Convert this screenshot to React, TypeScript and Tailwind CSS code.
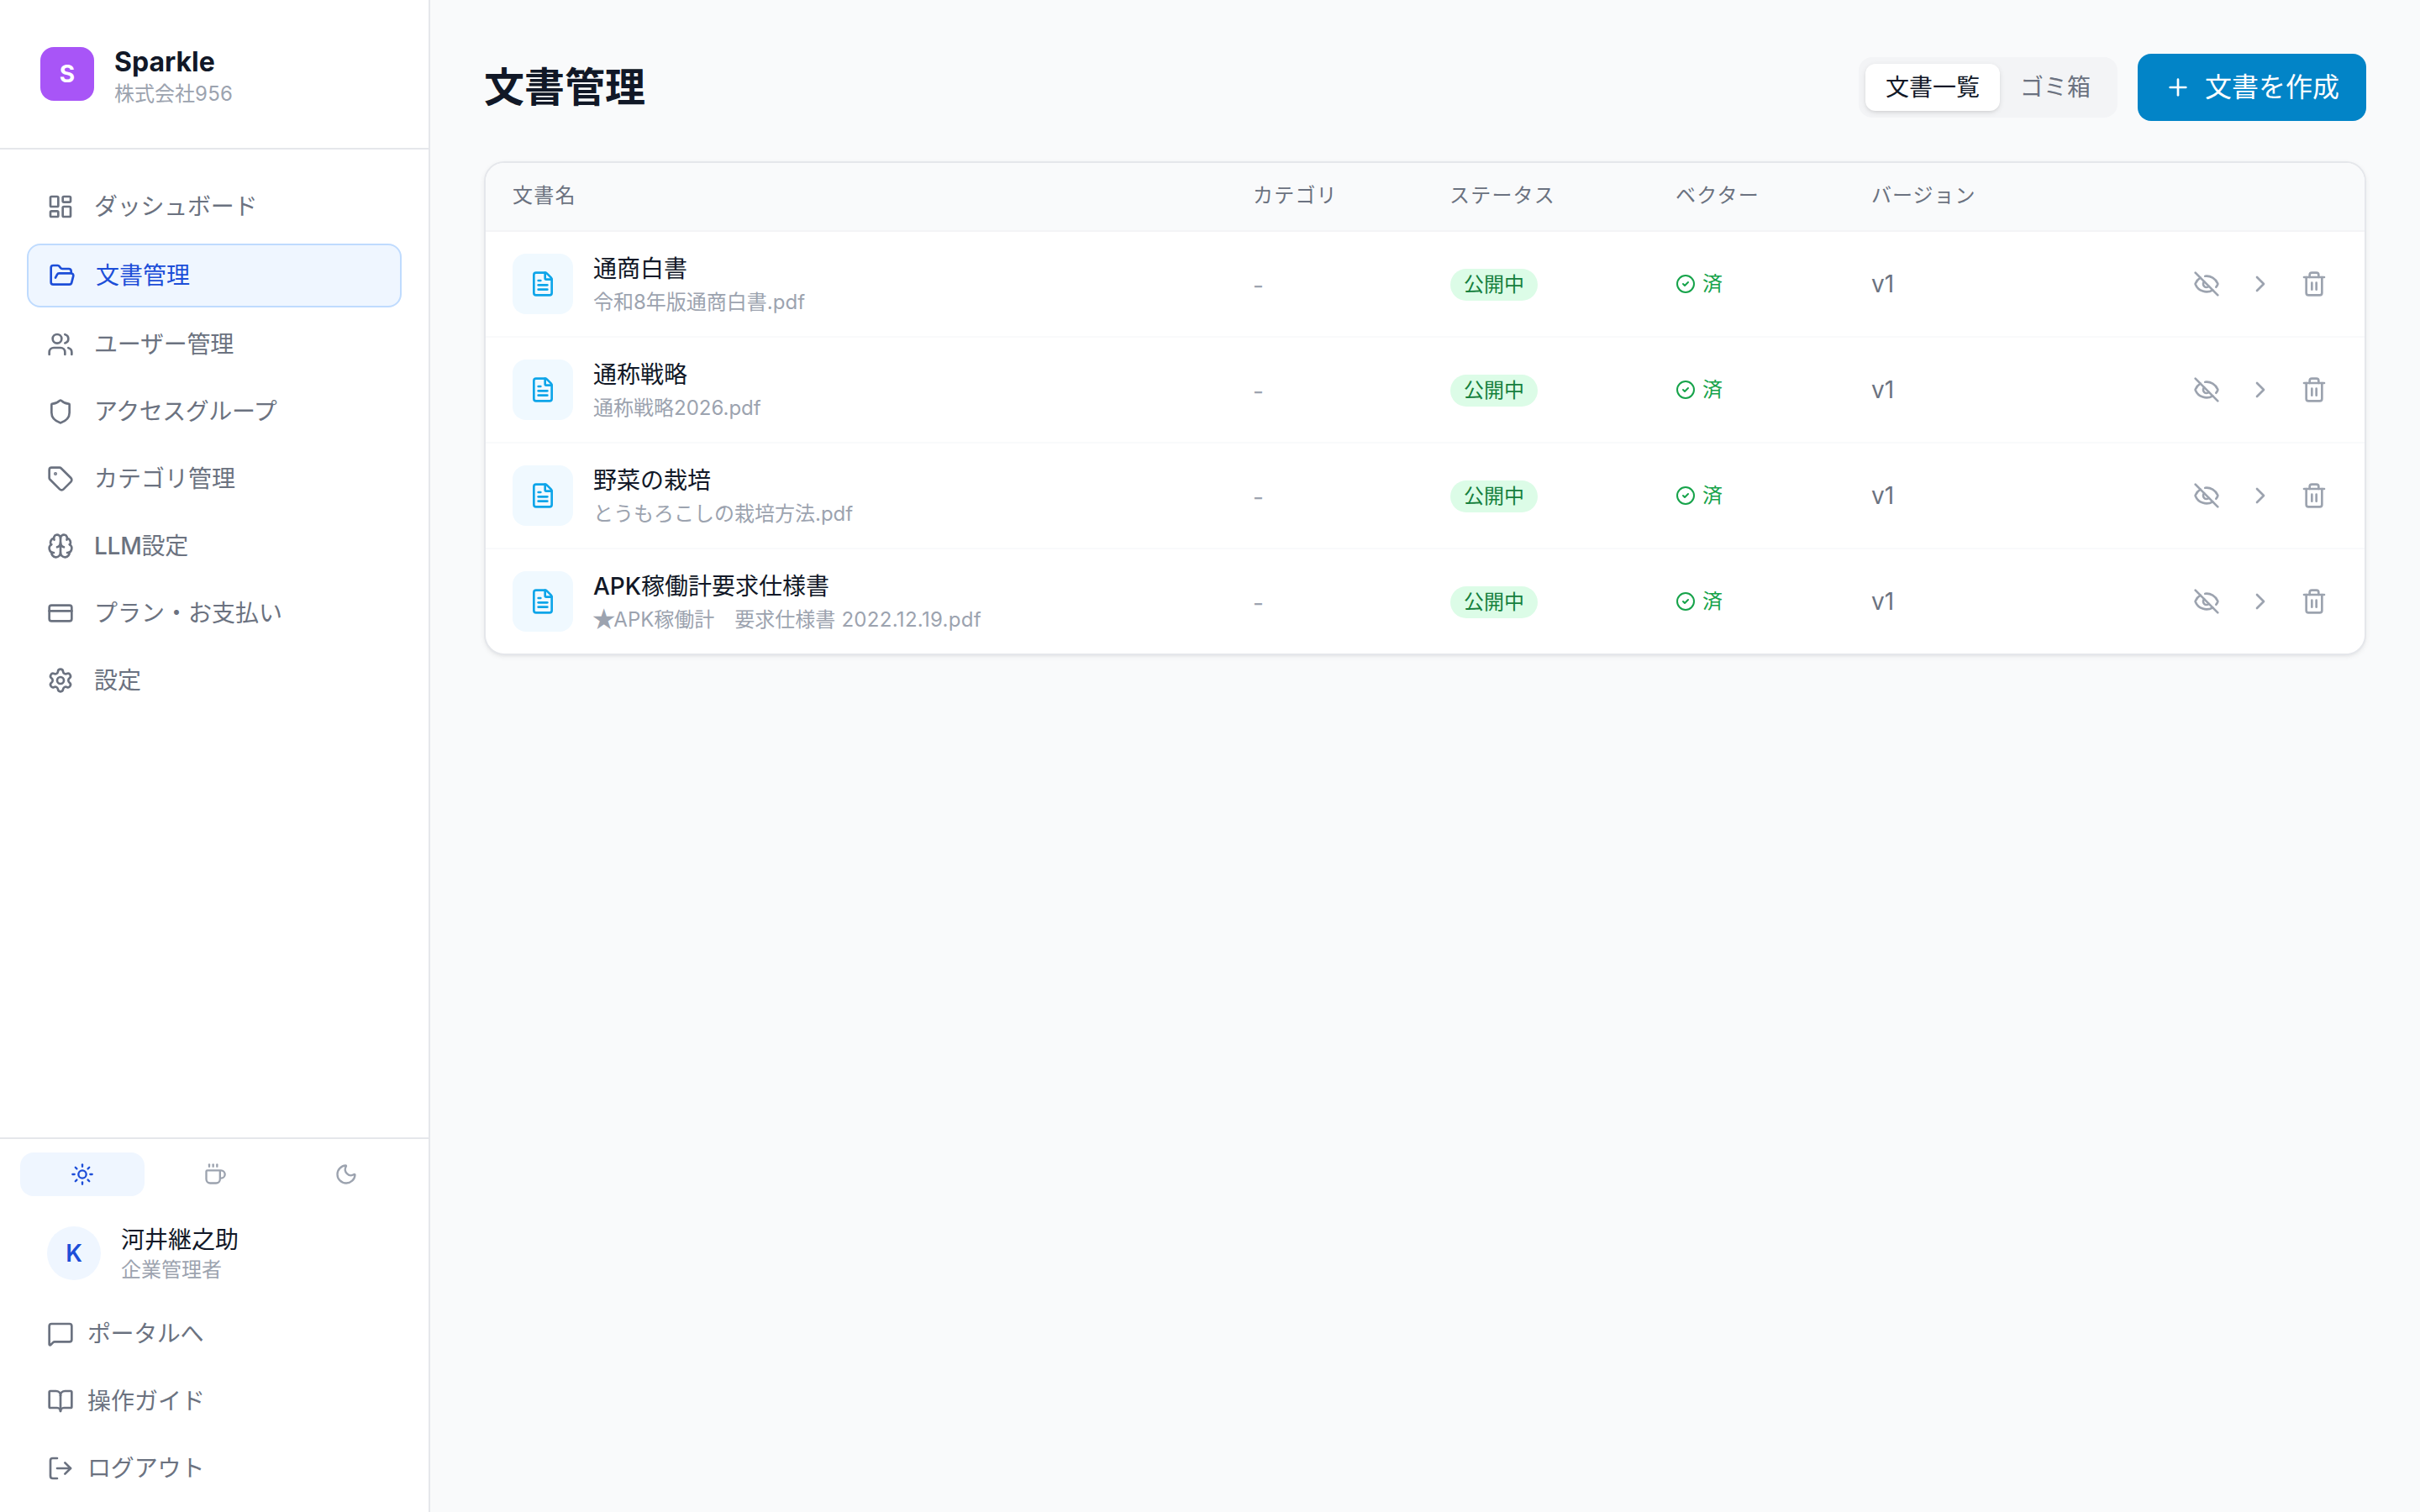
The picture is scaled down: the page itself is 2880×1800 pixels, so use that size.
import {
  LayoutDashboard, FolderOpen, Users, Shield, Tag, Brain, CreditCard, Settings, Sun, Coffee, Moon,
  MessageSquare, BookOpen, LogOut, Plus, FileText, CircleCheck, EyeOff, ChevronRight, Trash2,
  type LucideIcon,
} from 'lucide-react';

const navItems: { label: string; icon: LucideIcon; active?: boolean; tracking?: string }[] = [
  { label: 'ダッシュボード', icon: LayoutDashboard, tracking: 'tracking-[-0.25px]' },
  { label: '文書管理', icon: FolderOpen, active: true },
  { label: 'ユーザー管理', icon: Users, tracking: 'tracking-[-0.25px]' },
  { label: 'アクセスグループ', icon: Shield, tracking: 'tracking-[-0.45px]' },
  { label: 'カテゴリ管理', icon: Tag },
  { label: 'LLM設定', icon: Brain, tracking: 'tracking-[-0.25px]' },
  { label: 'プラン・お支払い', icon: CreditCard },
  { label: '設定', icon: Settings },
];

const footerLinks: { label: string; icon: LucideIcon; tracking?: string }[] = [
  { label: 'ポータルへ', icon: MessageSquare, tracking: 'tracking-[-0.4px]' },
  { label: '操作ガイド', icon: BookOpen },
  { label: 'ログアウト', icon: LogOut, tracking: 'tracking-[-0.15px]' },
];

const documents = [
  { name: '通商白書', file: '令和8年版通商白書.pdf' },
  { name: '通称戦略', file: '通称戦略2026.pdf' },
  { name: '野菜の栽培', file: 'とうもろこしの栽培方法.pdf' },
  { name: 'APK稼働計要求仕様書', file: '★APK稼働計　要求仕様書 2022.12.19.pdf' },
];

const columns = 'grid grid-cols-[882px_234px_268px_234px_1fr] items-center';

/* Latin runs carry medium weight, Japanese runs stay regular. */
function Label({ text }: { text: string }) {
  return (
    <>
      {text.split(/([A-Za-z]+)/).map((part, i) =>
        i % 2 ? <span key={i} className="font-medium">{part}</span> : part,
      )}
    </>
  );
}

/* Enlarges a leading star and opens up a trailing date. */
function FileName({ text }: { text: string }) {
  if (!text.startsWith('★')) return <>{text}</>;
  const cut = text.lastIndexOf(' ');
  return (
    <>
      <span className="-mr-[4px] -ml-[3px] text-[30px] leading-8">★</span>
      <span>{text.slice(1, cut)}</span>
      <span className="tracking-[0.3px]">{text.slice(cut)}</span>
    </>
  );
}

function Sidebar() {
  return (
    <aside className="flex w-[512px] shrink-0 flex-col border-r-2 border-[#e5e7eb] bg-white">
      <div className="flex h-[178px] items-center gap-6 border-b-2 border-[#e5e7eb] px-12">
        <div className="flex size-16 items-center justify-center rounded-2xl bg-[#a855f7] text-[28px] font-bold text-white">
          S
        </div>
        <div className="pt-[7px]">
          <p className="text-[32px] leading-10 font-bold text-[#111827]">Sparkle</p>
          <p className="text-2xl leading-9 text-[#9ca3af]">
            株式会社<span className="tracking-[0.3px]">956</span>
          </p>
        </div>
      </div>

      <nav className="flex flex-1 flex-col gap-2 p-8">
        {navItems.map(({ label, icon: Icon, active, tracking }) => (
          <a
            key={label}
            className={
              active
                ? 'flex items-center gap-6 rounded-2xl border-2 border-[#bfdbfe] bg-[#eff6ff] px-6 py-4 text-[28px] leading-10 text-[#1d4ed8]'
                : 'flex items-center gap-6 rounded-2xl px-6 py-4 text-[28px] leading-10 text-[#6b7280]'
            }
          >
            <Icon className="size-8" />
            <span className={tracking}><Label text={label} /></span>
          </a>
        ))}
      </nav>

      <div className="border-t-2 border-[#e5e7eb]">
        <div className="grid grid-cols-[148px_1fr_148px] gap-2 px-6 pt-4">
          <button className="flex h-[52px] items-center justify-center rounded-2xl bg-[#eff6ff] text-[#1d4ed8]">
            <Sun className="size-7" />
          </button>
          <button className="flex h-[52px] items-center justify-center rounded-2xl pl-0.5 text-[#9ca3af]">
            <Coffee className="size-7" />
          </button>
          <button className="flex h-[52px] items-center justify-center rounded-2xl text-[#9ca3af]">
            <Moon className="size-7" />
          </button>
        </div>
        <div className="flex flex-col px-8 pt-2 pb-4">
          <div className="flex items-center gap-6 p-6">
            <div className="flex size-16 items-center justify-center rounded-full bg-[#eff6ff] text-[28px] font-semibold text-[#1d4ed8]">
              K
            </div>
            <div>
              <p className="text-[28px] leading-10 text-[#111827]">河井継之助</p>
              <p className="text-2xl leading-8 text-[#9ca3af]">企業管理者</p>
            </div>
          </div>
          <div className="flex flex-col gap-2">
            {footerLinks.map(({ label, icon: Icon, tracking }) => (
              <a key={label} className="flex items-center gap-4 px-6 py-4 text-[28px] leading-10 text-[#6b7280]">
                <Icon className="size-8" />
                <span className={tracking}>{label}</span>
              </a>
            ))}
          </div>
        </div>
      </div>
    </aside>
  );
}

function DocumentRow({ name, file }: { name: string; file: string }) {
  return (
    <div className={`${columns} border-b-2 border-[#f9fafb] py-6 last:border-b-0`}>
      <div className="flex items-center gap-6 px-8">
        <div className="flex size-[72px] items-center justify-center rounded-2xl bg-[#f0f9ff] text-[#0ea5e9]">
          <FileText className="size-8" />
        </div>
        <div>
          <p className="text-[28px] leading-10 text-[#111827]"><Label text={name} /></p>
          <p className="mt-1 flex h-8 text-2xl leading-8 whitespace-pre text-[#9ca3af]"><FileName text={file} /></p>
        </div>
      </div>
      <div className="pt-1 pl-[31px] text-[28px] leading-10 text-[#9ca3af]">-</div>
      <div className="flex px-8 pt-0.5">
        <span className="flex h-[38px] items-center rounded-full bg-[#dcfce7] px-4 text-2xl leading-8 text-[#15803d]">
          公開中
        </span>
      </div>
      <div className="flex items-center gap-2 px-8 text-2xl leading-8 text-[#16a34a]">
        <CircleCheck className="size-6" />
        <span>済</span>
      </div>
      <div className="flex items-center justify-between pr-8 pl-[31px]">
        <span className="text-[28px] leading-10 text-[#6b7280]">v1</span>
        <div className="flex gap-2 text-[#9ca3af]">
          <button className="p-3"><EyeOff className="size-8" /></button>
          <button className="p-3"><ChevronRight className="size-8" /></button>
          <button className="p-3"><Trash2 className="size-8" /></button>
        </div>
      </div>
    </div>
  );
}

export default function App() {
  return (
    <div className="flex h-[1800px] w-[2880px] overflow-hidden bg-[#f9fafb] font-[Inter,'Noto_Sans_CJK_JP',sans-serif]">
      <Sidebar />
      <main className="flex-1 p-16">
        <header className="flex h-20 items-center justify-between">
          <h1 className="text-5xl leading-[64px] font-bold text-[#111827]">文書管理</h1>
          <div className="flex items-center gap-6">
            <div className="flex rounded-2xl bg-[#f3f4f6] p-2 text-[28px] leading-10">
              <button className="rounded-xl bg-white px-6 py-2 text-[#111827] shadow-[0_2px_6px_rgba(0,0,0,0.1),0_2px_4px_-2px_rgba(0,0,0,0.1)]">
                文書一覧
              </button>
              <button className="rounded-xl px-6 py-2 text-[#6b7280]">ゴミ箱</button>
            </div>
            <button className="flex h-20 items-center gap-4 rounded-2xl bg-[#0284c7] px-8 text-[32px] leading-12 text-white">
              <Plus className="size-8" />
              <span>文書を作成</span>
            </button>
          </div>
        </header>

        <section className="mt-12 overflow-hidden rounded-3xl border-2 border-[#e5e7eb] bg-white shadow-[0_2px_6px_rgba(0,0,0,0.06),0_2px_4px_-2px_rgba(0,0,0,0.06)]">
          <div className={`${columns} border-b-2 border-[#f3f4f6] bg-[#f9fafb] pt-[23px] pb-[25px] text-2xl leading-8 tracking-[0.05em] text-[#6b7280]`}>
            <div className="pl-8">文書名</div>
            <div className="pl-[31px]">カテゴリ</div>
            <div className="pl-[31px]">ステータス</div>
            <div className="pl-8">ベクター</div>
            <div className="pl-[31px] tracking-[1px]">バージョン</div>
          </div>
          {documents.map((doc) => (
            <DocumentRow key={doc.name} name={doc.name} file={doc.file} />
          ))}
        </section>
      </main>
    </div>
  );
}
